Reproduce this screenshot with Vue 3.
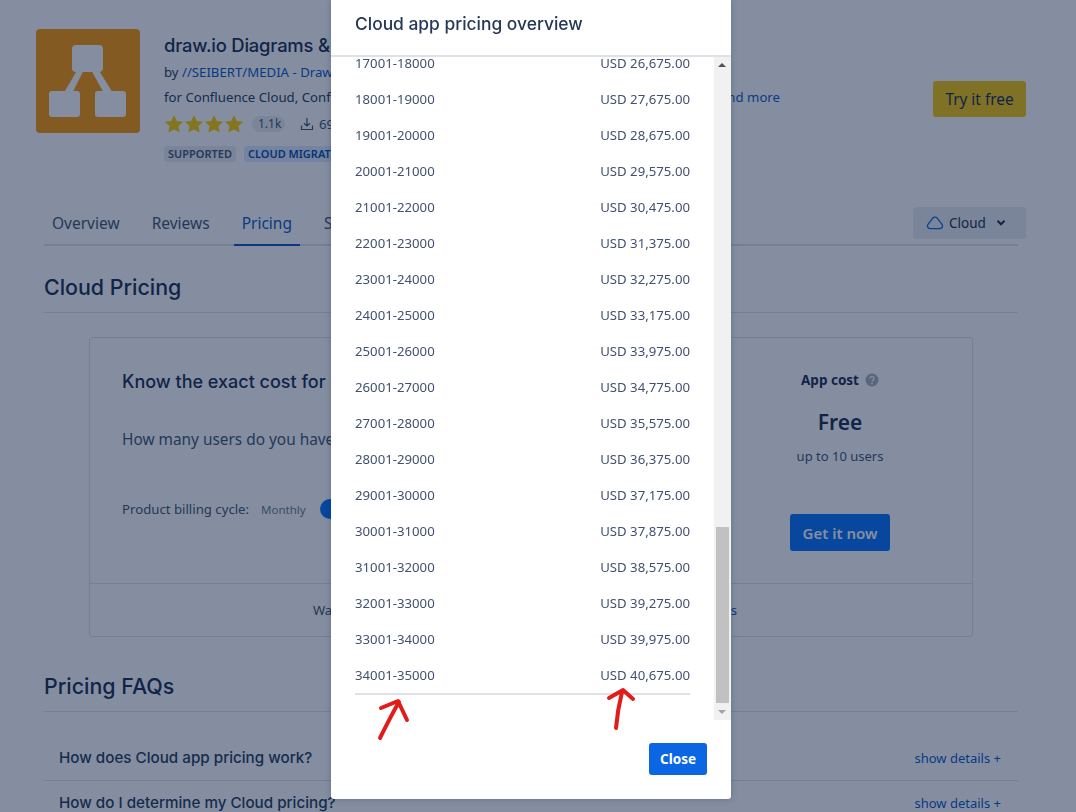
<script setup>
const rows = [
  ['17001-18000', '26,675.00'], ['18001-19000', '27,675.00'], ['19001-20000', '28,675.00'],
  ['20001-21000', '29,575.00'], ['21001-22000', '30,475.00'], ['22001-23000', '31,375.00'],
  ['23001-24000', '32,275.00'], ['24001-25000', '33,175.00'], ['25001-26000', '33,975.00'],
  ['26001-27000', '34,775.00'], ['27001-28000', '35,575.00'], ['28001-29000', '36,375.00'],
  ['29001-30000', '37,175.00'], ['30001-31000', '37,875.00'], ['31001-32000', '38,575.00'],
  ['32001-33000', '39,275.00'], ['33001-34000', '39,975.00'], ['34001-35000', '40,675.00']
]
const tabs = ['Overview', 'Reviews', 'Pricing', 'Support']
const faqs = ['How does Cloud app pricing work?', 'How do I determine my Cloud pricing?']
</script>

<template>
  <div class="page">
    <header class="head">
      <svg class="logo" viewBox="0 0 104 104" width="104" height="104">
        <rect width="104" height="104" rx="4" fill="#ff9604" />
        <g fill="#fff">
          <rect x="36" y="16" width="31" height="27" rx="4" />
          <rect x="13" y="62" width="31" height="26" rx="3" />
          <rect x="59" y="62" width="31" height="26" rx="3" />
          <polygon points="40.7,42 47.3,42 37.3,62 29,62" />
          <polygon points="55.7,42 63.3,42 75.7,62 66.7,62" />
        </g>
      </svg>
      <div class="info">
        <h1 class="title">draw.io Diagrams &amp; Whiteboards</h1>
        <div class="by">by <a>//SEIBERT/MEDIA - Draw.io</a></div>
        <div class="for"><span>for Confluence Cloud, Confluence Server, Confluence Data Center</span><a>and more</a></div>
        <div class="stats">
          <span class="stars">
            <svg v-for="n in 4" :key="n" viewBox="0 0 20 20" width="20" height="20">
              <polygon points="10,1 12.8,6.9 19.2,7.7 14.5,12.1 15.7,18.5 10,15.4 4.3,18.5 5.5,12.1 0.8,7.7 7.2,6.9" fill="#ffcc00" />
            </svg>
          </span>
          <span class="count">1.1k</span>
          <svg class="dl" viewBox="0 0 14 14" width="14" height="14" fill="none" stroke="#42526e" stroke-width="1.2">
            <path d="M7 1v8M4 6.2 7 9l3-2.8M1.5 8.5V12.5h11V8.5" />
          </svg>
          <span class="installs">69,000</span>
        </div>
        <div class="tags">
          <span class="tag">SUPPORTED</span>
          <span class="tag blue">CLOUD MIGRATION</span>
        </div>
      </div>
      <button class="try">Try it free</button>
    </header>

    <nav class="tabbar">
      <div class="tabs">
        <span v-for="t in tabs" :key="t" class="tab" :class="{ on: t === 'Pricing' }">{{ t }}</span>
      </div>
      <button class="hosting">
        <svg viewBox="0 0 18 14" width="18" height="14" fill="none" stroke="#0b66e4" stroke-width="1.3">
          <path d="M4 12.6h10a2.6 2.6 0 0 0 2-4.2L11.4 2.4a3 3 0 0 0-4.8 0L2 8.4a2.6 2.6 0 0 0 2 4.2z" />
        </svg>
        <span>Cloud</span>
        <svg class="chev" viewBox="0 0 10 8" width="10" height="8" fill="none" stroke="#172b4d" stroke-width="2">
          <path d="M1.5 1.8 5 5.3l3.5-3.5" />
        </svg>
      </button>
    </nav>

    <section class="section">
      <h2 class="h2">Cloud Pricing</h2>
      <div class="card">
        <div class="card-main">
          <div class="calc">
            <h3 class="calc-title">Know the exact cost for your team</h3>
            <p class="calc-q">How many users do you have?</p>
            <div class="billing">
              <span>Product billing cycle:</span>
              <span class="muted">Monthly</span>
              <span class="toggle"></span>
            </div>
          </div>
          <div class="cost">
            <div class="cost-label">
              App cost
              <svg viewBox="0 0 14 14" width="14" height="14">
                <circle cx="7" cy="7" r="6.5" fill="#a5adba" />
                <path d="M5 5.5a2 2 0 1 1 3.1 1.6c-.7.5-1.1.8-1.1 1.5" fill="none" stroke="#fff" stroke-width="1.3" />
                <circle cx="7" cy="10.6" r=".9" fill="#fff" />
              </svg>
            </div>
            <div class="free">Free</div>
            <div class="upto">up to 10 users</div>
            <button class="get">Get it now</button>
          </div>
        </div>
        <div class="card-foot">Want to know more about how we price our apps? <a>See pricing details</a></div>
      </div>
    </section>

    <section class="section">
      <h2 class="h2 faq-h">Pricing FAQs</h2>
      <div class="faqs">
        <div v-for="q in faqs" :key="q" class="faq">
          <span class="q">{{ q }}</span>
          <a class="show">show details +</a>
        </div>
      </div>
    </section>

    <div class="overlay">
      <div class="modal">
        <div class="modal-head">Cloud app pricing overview</div>
        <div class="modal-body">
          <div class="clip">
            <div class="list">
              <div v-for="r in rows" :key="r[0]" class="row">
                <span>{{ r[0] }}</span>
                <span>USD {{ r[1] }}</span>
              </div>
            </div>
          </div>
          <div class="scroll">
            <span class="arrow up"></span>
            <span class="thumb"></span>
            <span class="arrow down"></span>
          </div>
        </div>
        <div class="modal-foot"><button class="close">Close</button></div>
        <svg class="marks" viewBox="0 0 400 100" width="400" height="100" fill="none" stroke="#e21b1b" stroke-width="4" stroke-linecap="round" stroke-linejoin="round">
          <path d="M49 58C56 44 62 32 68 22M50 28 67 21 76 40" />
          <path d="M285 48C286 36 288 24 291 12M278 18 292 10 302 19" />
        </svg>
      </div>
    </div>
  </div>
</template>

<style>
html, body { overflow: hidden; background: #fff; }
</style>

<style scoped>
* { box-sizing: border-box; }
.page { font-family: "Noto Sans", "Open Sans", sans-serif; font-size: 13.2px; color: #172b4d; width: 1076px; height: 812px; overflow: hidden; }
a { color: #0b55c4; }
h1, h2, h3, p { margin: 0; }
button { font-family: inherit; border: 0; cursor: pointer; }

.head { display: flex; align-items: flex-start; height: 207px; padding: 29px 50px 0 36px; }
.logo { flex: none; }
.info { width: 616px; margin-left: 24px; padding-top: 5px; }
.title { font: 500 18.4px/22px Inter, sans-serif; letter-spacing: -.2px; white-space: nowrap; }
.by { margin-top: 5px; line-height: 22px; color: #253858; }
.for { margin-top: 3px; line-height: 22px; display: flex; justify-content: space-between; color: #253858; }
.stats { margin-top: 4px; height: 24px; display: flex; align-items: center; }
.stars { display: flex; }
.count { margin-left: 8px; padding: 0 6px; width: 33px; background: #ebecf0; border-radius: 8px; font-size: 12px; line-height: 16px; color: #42526e; white-space: nowrap; }
.dl { margin-left: 15px; }
.installs { margin-left: 5px; color: #42526e; }
.tags { margin-top: 10px; display: flex; gap: 8px; }
.tag { height: 16px; padding: 0 4px; background: #ebecf0; border-radius: 3px; font-size: 11px; font-weight: 600; line-height: 16px; color: #42526e; white-space: nowrap; }
.tag.blue { background: #deebff; color: #0747a6; }
.try { margin: 52px 0 0 auto; width: 93px; height: 36px; background: #f4c60c; border-radius: 3px; font-size: 15.4px; color: #172b4d; }

.tabbar { margin: 0 58px 0 44px; height: 39px; border-bottom: 2px solid #dfe1e6; display: flex; justify-content: space-between; }
.tabs { display: flex; gap: 16px; }
.tab { height: 39px; padding: 6px 8px 0; font-size: 15.5px; line-height: 20px; color: #42526e; border-bottom: 2px solid transparent; }
.tab.on { color: #0b55c4; border-bottom-color: #0b55c4; }
.hosting { width: 113px; height: 32px; margin-right: -8px; background: #ebecf0; border-radius: 3px; display: flex; align-items: center; padding: 0 0 0 13px; font-size: 13.5px; color: #172b4d; }
.hosting span { margin-left: 5px; }
.chev { margin-left: 10px; }

.section { margin: 0 58px 0 44px; }
.h2 { font: 500 21.4px/26px Inter, sans-serif; padding: 28px 0 12px; border-bottom: 1px solid #dfe1e6; }
.faq-h { padding-top: 36px; }
.card { margin: 24px 45px 0; height: 300px; border: 1px solid #dfe1e6; border-radius: 3px; display: flex; flex-direction: column; }
.card-main { height: 245px; display: flex; justify-content: space-between; overflow: hidden; }
.calc { padding: 33px 0 0 32px; }
.calc-title { font: 500 18px/22px Inter, sans-serif; white-space: nowrap; }
.calc-q { margin-top: 35px; font-size: 15.4px; line-height: 24px; color: #42526e; }
.billing { margin-top: 47px; height: 20px; display: flex; align-items: center; color: #42526e; }
.muted { margin-left: 12px; font-size: 11.5px; color: #6b778c; }
.toggle { margin-left: 14px; width: 40px; height: 20px; border-radius: 10px; background: #0570fa; }
.cost { width: 220px; margin-right: 22px; padding-top: 32px; display: flex; flex-direction: column; align-items: center; }
.cost-label { height: 20px; font-size: 13.5px; font-weight: 700; line-height: 20px; display: flex; align-items: center; gap: 6px; }
.free { margin-top: 17px; font-size: 21px; font-weight: 600; line-height: 30px; }
.upto { margin-top: 9px; font-size: 13px; line-height: 20px; color: #42526e; }
.get { margin-top: 48px; width: 100px; height: 37px; background: #0570fa; border-radius: 3px; font-size: 15px; font-weight: 600; color: #fff; }
.card-foot { flex: 1; border-top: 1px solid #dfe1e6; display: flex; align-items: center; justify-content: center; gap: 4px; padding-right: 12px; font-size: 13.1px; color: #42526e; white-space: nowrap; }

.faqs { margin-top: 24px; }
.faq { height: 45px; padding: 0 17px 0 15px; border-bottom: 1px solid #dfe1e6; display: flex; align-items: center; justify-content: space-between; }
.q { font: 500 15.2px/20px Inter, sans-serif; color: #253858; }
.show { font-size: 13px; color: #0b55c4; }

.overlay { position: fixed; inset: 0; background: rgba(9, 30, 66, 0.5); display: flex; justify-content: center; align-items: flex-start; padding-right: 14px; }
.modal { position: relative; width: 400px; height: 799px; background: #fff; border-radius: 0 0 3px 3px; box-shadow: 0 0 6px rgba(9, 30, 66, .25); display: flex; flex-direction: column; }
.modal-head { height: 57px; padding: 13px 24px 0; border-bottom: 2px solid #dfe1e6; font: 500 17.4px/22px Inter, sans-serif; color: #253858; }
.modal-body { height: 663px; display: flex; }
.clip { flex: 1; overflow: hidden; padding: 0 24px; }
.list { margin-top: -12px; border-bottom: 2px solid #dfe1e6; }
.row { height: 36px; display: flex; align-items: center; justify-content: space-between; color: #42526e; }
.scroll { width: 17px; background: #f1f1f1; display: flex; flex-direction: column; align-items: center; position: relative; }
.arrow { position: absolute; left: 4px; width: 0; height: 0; border-left: 4px solid transparent; border-right: 4px solid transparent; }
.arrow.up { top: 6px; border-bottom: 4px solid #505050; }
.arrow.down { bottom: 6px; border-top: 4px solid #a3a3a3; }
.thumb { position: absolute; top: 470px; left: 2px; width: 13px; height: 176px; background: #c1c1c1; }
.modal-foot { flex: 1; display: flex; justify-content: flex-end; padding: 23px 24px 0; }
.close { width: 58px; height: 32px; background: #0b66e4; border-radius: 3px; color: #fff; font-size: 13.5px; font-weight: 700; }
.marks { position: absolute; left: 0; top: 680px; pointer-events: none; }
</style>
